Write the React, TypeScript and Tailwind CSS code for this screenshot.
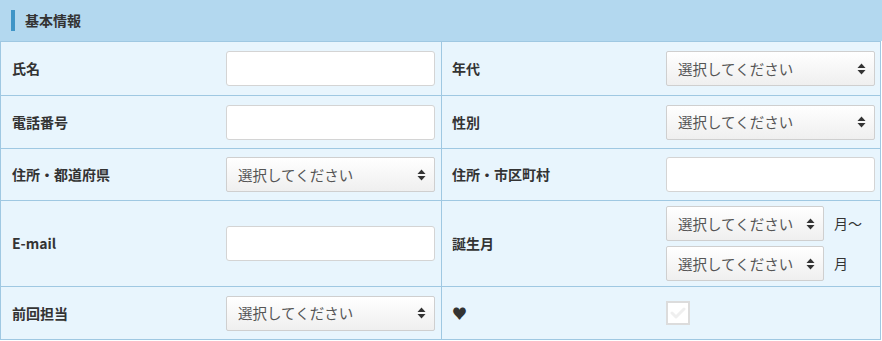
import React from 'react';

const FONT = "font-['Meiryo','Noto_Sans_CJK_JP',sans-serif]";

function SortIcon() {
  return (
    <svg width="9" height="13" viewBox="0 0 9 13" className="text-[#333]">
      <path d="M0.5 5.5 L4.5 1 L8.5 5.5 Z" fill="currentColor" />
      <path d="M0.5 7.5 L4.5 12 L8.5 7.5 Z" fill="currentColor" />
    </svg>
  );
}

function Select({ width = 'w-[209px]' }: { width?: string }) {
  return (
    <div className={`relative h-[35px] ${width}`}>
      <select
        defaultValue=""
        className={`h-full w-full appearance-none rounded-[2px] border border-[#cfcfcf] bg-gradient-to-b from-white to-[#efefef] pl-[11px] pr-7 text-[14.5px] text-[#555] outline-none ${FONT}`}
      >
        <option value="">選択してください</option>
      </select>
      <div className="pointer-events-none absolute right-[9px] top-1/2 -translate-y-1/2 flex">
        <SortIcon />
      </div>
    </div>
  );
}

function TextInput() {
  return (
    <input
      type="text"
      className="h-[35px] w-[209px] rounded-[3px] border border-[#d4d4d4] bg-white px-2 text-[14px] outline-none"
    />
  );
}

function Cell({ label, children, right = false }: { label: React.ReactNode; children: React.ReactNode; right?: boolean }) {
  return (
    <div className="flex flex-1 items-center">
      <div className={`w-[214px] shrink-0 text-[14px] font-bold text-[#333] ${right ? 'pl-[10px]' : 'pl-[11px]'}`}>{label}</div>
      <div className={right ? 'pl-[10px]' : 'pl-[11px]'}>{children}</div>
    </div>
  );
}

function Row({ h, left, right }: { h: string; left: React.ReactNode; right: React.ReactNode }) {
  return (
    <div className={`flex border-t border-[#9fc8e2] ${h}`}>
      <div className="flex w-[441px] border-r border-[#9fc8e2]">{left}</div>
      <div className="flex flex-1">{right}</div>
    </div>
  );
}

export default function App() {
  return (
    <div className={`w-[882px] bg-white ${FONT}`}>
      {/* Header */}
      <div className="flex h-[41px] items-center bg-[#b3d8ef] pl-[11px]">
        <div className="h-[21px] w-[4px] bg-[#3f95c7]" />
        <h2 className="ml-[10px] text-[14px] font-bold text-[#333]">基本情報</h2>
      </div>

      <div className="w-[881px] border-x border-b border-[#9fc8e2] bg-[#e8f5fd]">
        <Row
          h="h-[54px]"
          left={<Cell label="氏名"><TextInput /></Cell>}
          right={<Cell right label="年代"><Select /></Cell>}
        />
        <Row
          h="h-[53px]"
          left={<Cell label="電話番号"><TextInput /></Cell>}
          right={<Cell right label="性別"><Select /></Cell>}
        />
        <Row
          h="h-[52px]"
          left={<Cell label="住所・都道府県"><Select /></Cell>}
          right={<Cell right label="住所・市区町村"><TextInput /></Cell>}
        />
        <Row
          h="h-[86px]"
          left={<Cell label="E-mail"><TextInput /></Cell>}
          right={
            <Cell right label="誕生月">
              <div className="flex flex-col gap-[5px]">
                <div className="flex items-center gap-[10px]">
                  <Select width="w-[158px]" />
                  <span className="text-[14px] text-[#333]">月～</span>
                </div>
                <div className="flex items-center gap-[10px]">
                  <Select width="w-[158px]" />
                  <span className="text-[14px] text-[#333]">月</span>
                </div>
              </div>
            </Cell>
          }
        />
        <Row
          h="h-[53px]"
          left={<Cell label="前回担当"><Select /></Cell>}
          right={
            <Cell right label={<span className="text-[15px]">♥</span>}>
              <div className="flex h-[24px] w-[24px] items-center justify-center border-2 border-[#dcdcdc] bg-white">
                <svg width="16" height="12" viewBox="0 0 16 12">
                  <path d="M2 6 L6 10 L14 2" stroke="#efefef" strokeWidth="3" fill="none" strokeLinecap="round" strokeLinejoin="round" />
                </svg>
              </div>
            </Cell>
          }
        />
      </div>
    </div>
  );
}
